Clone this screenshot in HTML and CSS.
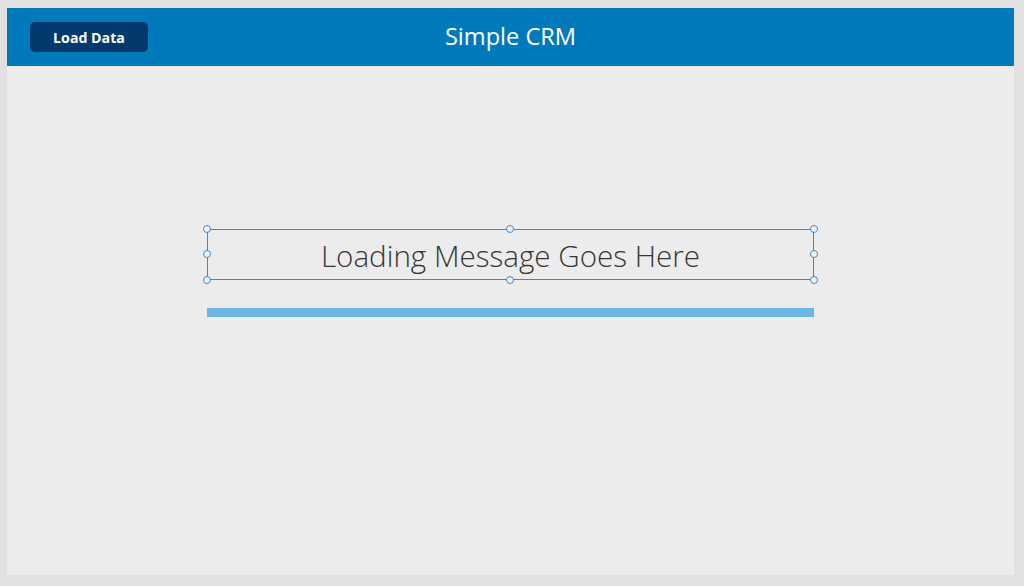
FILE: index.html
```html
<!DOCTYPE html>
<html>
<head>
<meta charset="utf-8">
<link rel="stylesheet" href="styles.css">
</head>
<body>
<div class="canvas">
  <header class="topbar">
    <button class="load-btn">Load Data</button>
    <div class="title">Simple CRM</div>
  </header>
  <main class="stage">
    <div class="selection">
      <div class="msg">Loading Message Goes Here</div>
      <span class="h tl"></span><span class="h tc"></span><span class="h tr"></span>
      <span class="h ml"></span><span class="h mr"></span>
      <span class="h bl"></span><span class="h bc"></span><span class="h br"></span>
    </div>
    <div class="progress"></div>
  </main>
</div>
</body>
</html>
```
FILE: styles.css
```css
html, body { margin: 0; padding: 0; }
body {
  width: 1024px; height: 586px;
  background: #e1e1e1;
  font-family: "Open Sans", "Noto Sans", sans-serif;
  overflow: hidden;
}
.canvas {
  margin: 8px 0 0 7px;
  width: 1007px; height: 567px;
  background: #ececec;
  display: flex; flex-direction: column;
}
.topbar {
  position: relative;
  height: 58px;
  background: #0179bb;
  display: flex; align-items: center;
  padding-left: 23px;
}
.load-btn {
  width: 118px; height: 30px;
  background: #033a6d;
  color: #fff;
  border: none; border-radius: 5px;
  font-family: "Open Sans", sans-serif;
  font-weight: 700; font-size: 14.2px;
  padding: 0;
}
.title {
  position: absolute; left: 0; right: 0; top: 0; bottom: 0;
  display: flex; align-items: center; justify-content: center;
  color: #fff; font-size: 23.6px;
  pointer-events: none;
  padding-bottom: 2px;
}
.stage {
  padding: 163px 0 0 200px;
}
.selection {
  position: relative;
  width: 607px; height: 51px;
  box-sizing: border-box;
  border: 1px solid #3f88cc;
  display: flex; align-items: center; justify-content: center;
}
.msg {
  font-family: "Open Sans", sans-serif;
  font-weight: 300;
  font-size: 29.6px;
  color: #363636;
  padding-top: 2px;
}
.h {
  position: absolute;
  width: 6px; height: 6px;
  border: 1px solid #3f88cc;
  border-radius: 50%;
  background: #f2f6fa;
}
.tl { left: -5px; top: -5px; }
.tc { left: 298px; top: -5px; }
.tr { right: -5px; top: -5px; }
.ml { left: -5px; top: 20px; }
.mr { right: -5px; top: 20px; }
.bl { left: -5px; bottom: -5px; }
.bc { left: 298px; bottom: -5px; }
.br { right: -5px; bottom: -5px; }
.progress {
  margin-top: 28px;
  width: 607px; height: 9px;
  background: #6bb6e2;
}
```
